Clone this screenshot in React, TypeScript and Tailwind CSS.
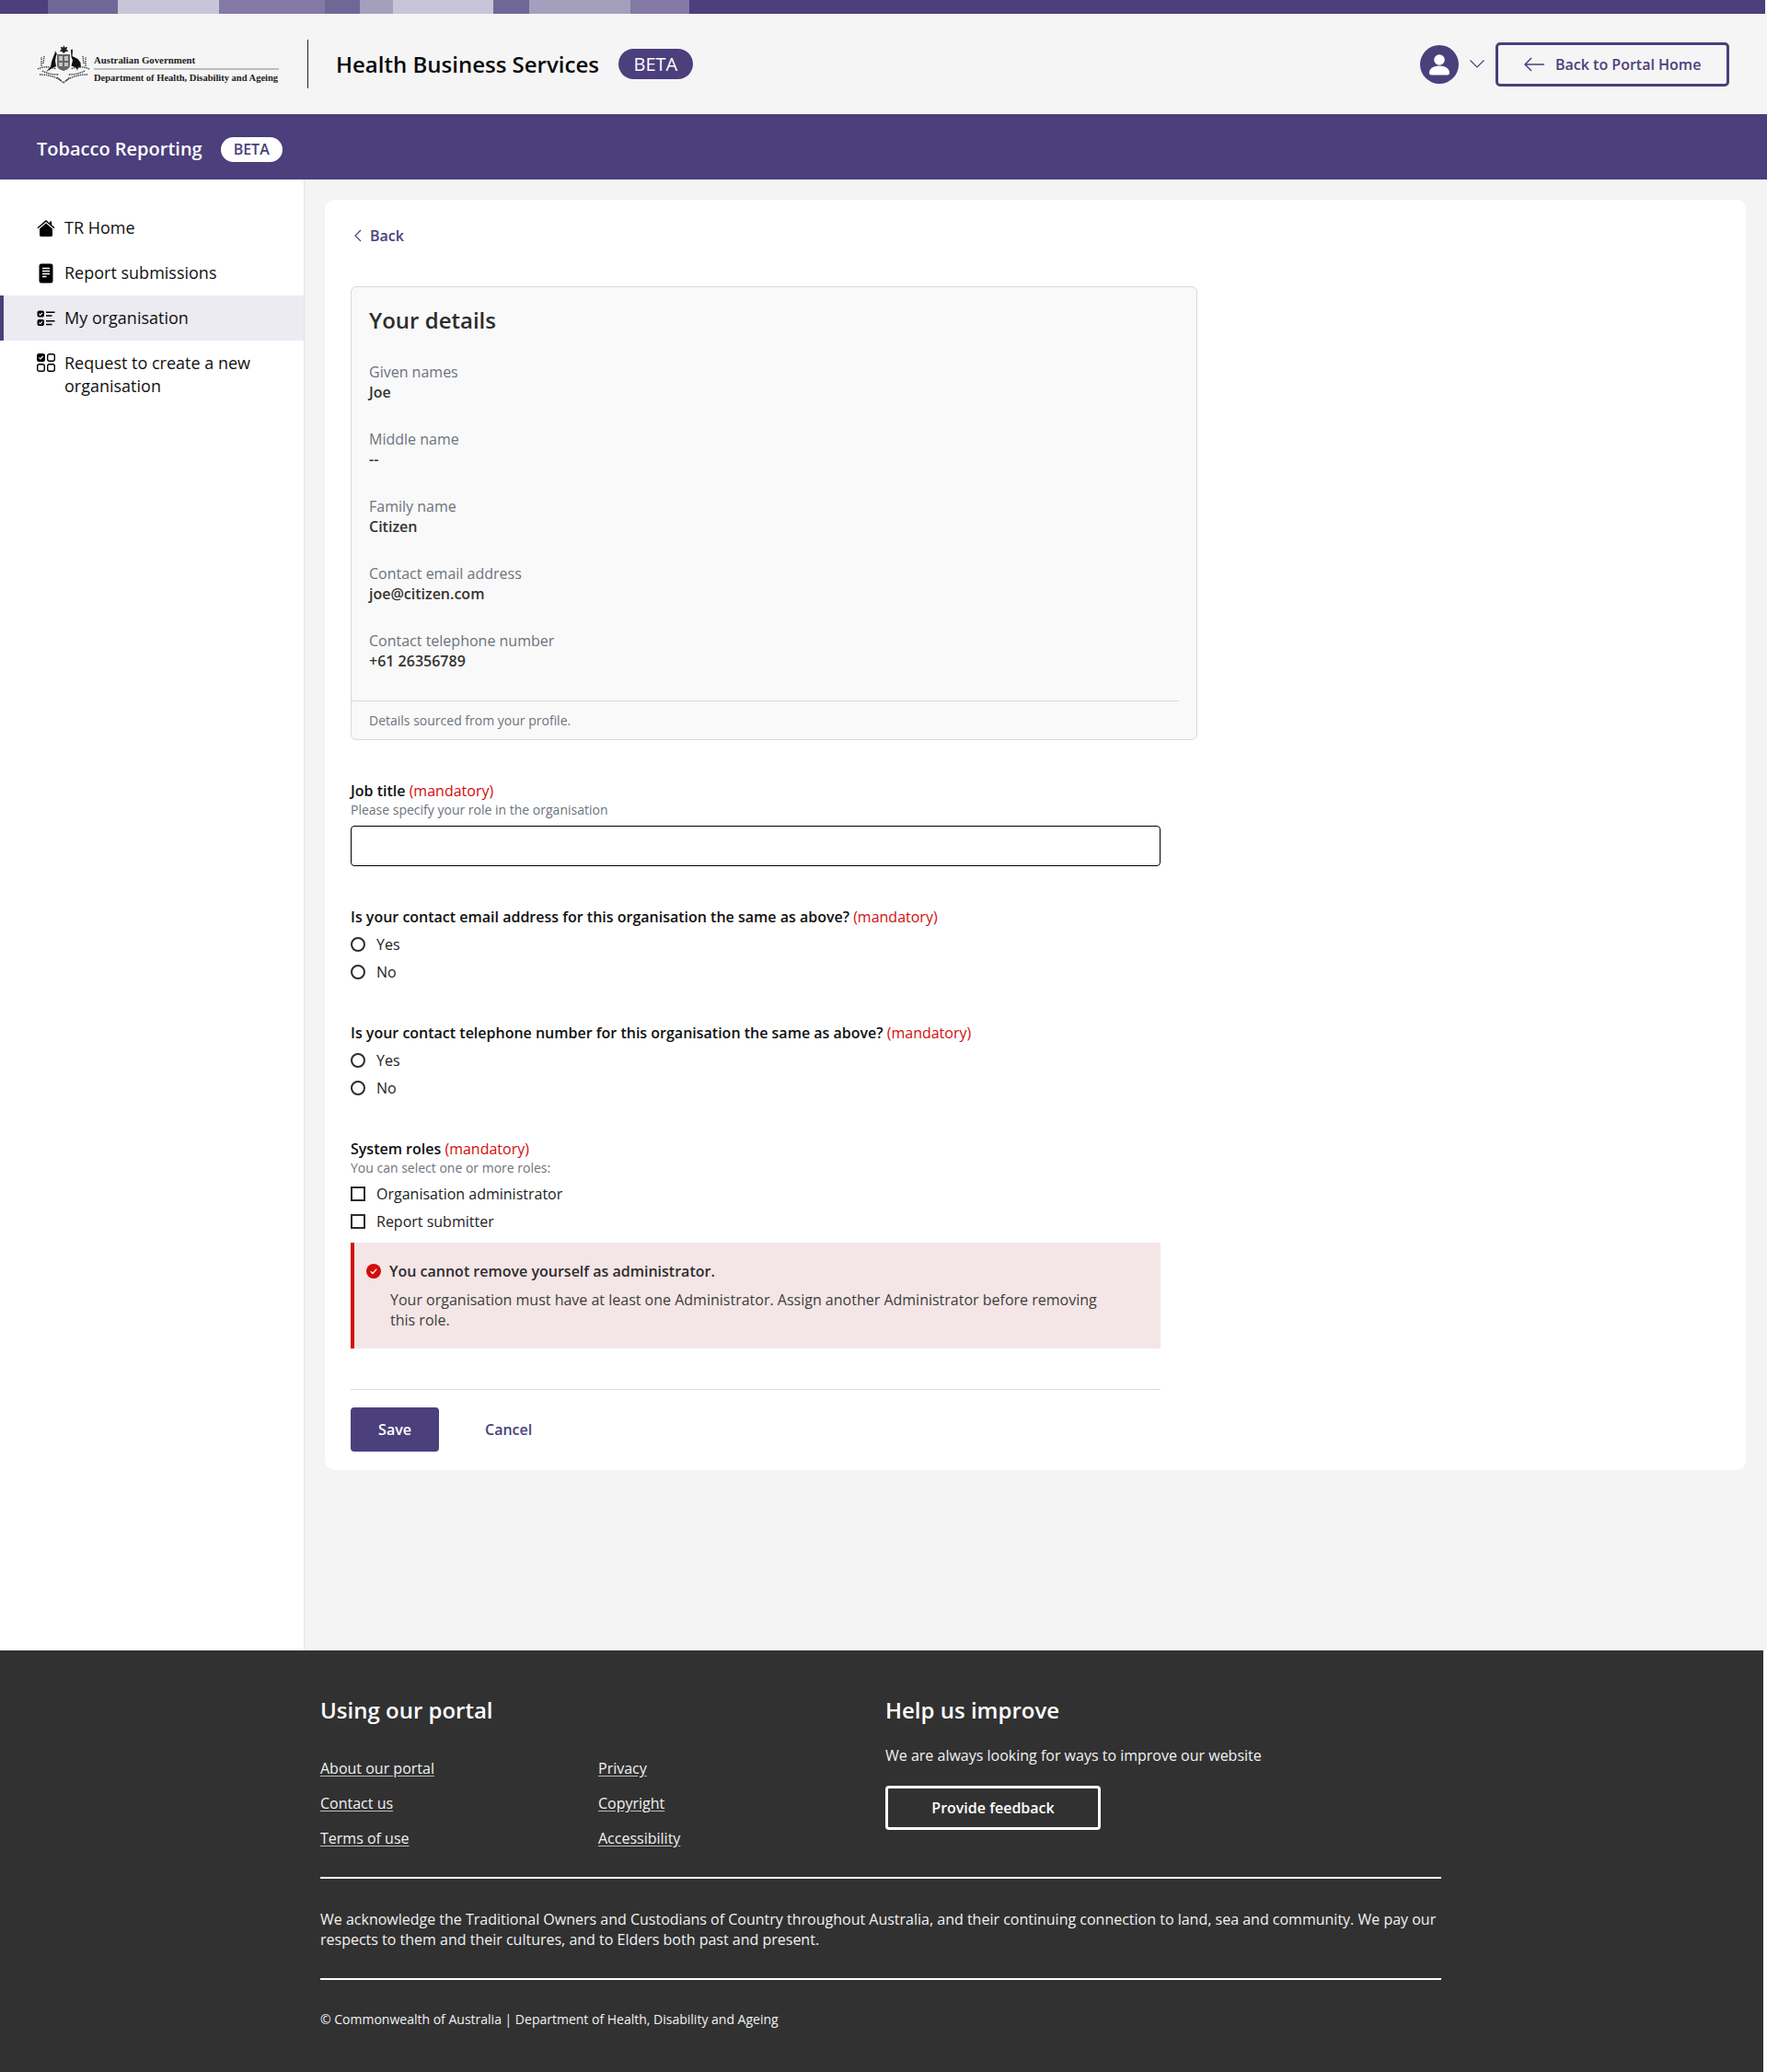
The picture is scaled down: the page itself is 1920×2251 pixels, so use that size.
import type { ReactNode } from 'react'

const stripes = [
  ['w-[52px]', 'bg-[#4b3f7c]'],
  ['w-[76px]', 'bg-[#6f6896]'],
  ['w-[110px]', 'bg-[#c9c5d8]'],
  ['w-[115px]', 'bg-[#827aa5]'],
  ['w-[38px]', 'bg-[#6f6896]'],
  ['w-[36px]', 'bg-[#a59fbe]'],
  ['w-[109px]', 'bg-[#c9c5d8]'],
  ['w-[39px]', 'bg-[#6f6896]'],
  ['w-[110px]', 'bg-[#a59fbe]'],
  ['w-[64px]', 'bg-[#827aa5]'],
  ['flex-1', 'bg-[#4b3f7c]'],
]

function Crest() {
  return (
    <svg width="58" height="42" viewBox="0 0 58 42" className="shrink-0">
      {/* star */}
      <path d="M29 0l1.400 2.600 2.800-.6-.9 2.700 2 2-2.800.4L29 9l-1.500-1.900-2.800-.4 2-2-.9-2.700 2.800.6z" fill="#222" />
      {/* shield */}
      <path d="M22 10h14v12c0 3-3 5-7 6-4-1-7-3-7-6z" fill="#666" />
      <path d="M24 12h4v5h-4zM30 12h4v5h-4zM24 19h4v4h-4zM30 19h4v4h-4z" fill="#c4c4c4" />
      {/* kangaroo */}
      <path d="M20 6l1 2.500 1 .5-1 2.500-1 5.500 1 6-4 2-7 4 5-5.500 1-5.500 2-5.500 1.500-3.500z" fill="#111" />
      {/* emu */}
      <path d="M37 5l1.500-.5.5 1.500-.5 6 6 3 3 4 .5 5-3 .5-1 3-1.500-3-5-2 .5-2 1-4-1.500-3.500z" fill="#111" />
      {/* wreath */}
      <g fill="none" stroke="#333" strokeWidth="1.300" strokeDasharray="1.500 .8">
        <path d="M1 26c6-3 13-3 20 0M57 26c-6-3-13-3-20 0" />
        <path d="M3 32c7 0 15 1 24 7M55 32c-7 0-15 1-24 7" />
        <path d="M6 28c5 3 11 4 18 4M52 28c-5 3-11 4-18 4" />
        <path d="M5 23V13M7 20l1-8M53 23V13M51 20l-1-8" />
        <path d="M22 35l7 6 7-6" />
      </g>
    </svg>
  )
}

function Logo() {
  return (
    <div className="flex items-center gap-[4px] w-[263px]">
      <Crest />
      <div className="flex-1 pt-[10px] font-['Liberation_Serif',serif] font-bold text-[#222] whitespace-nowrap">
        <div className="text-[10.800px] leading-[18px]">Australian Government</div>
        <div className="h-[2px] bg-[#bdbdbd]" />
        <div className="text-[10.500px] leading-[17px]">Department of Health, Disability and Ageing</div>
      </div>
    </div>
  )
}

function HomeIcon() {
  return (
    <svg width="20" height="20" viewBox="0 0 20 20">
      <path d="M10 1l4 3.400V2.500h2.200v3.800L19.500 9.300l-.9 1L10 3 1.400 10.300l-.9-1z" fill="#000" />
      <path d="M3 10.500L10 4.600l7 5.900v6.700c0 1-.7 1.700-1.700 1.700H4.700C3.700 18.900 3 18.200 3 17.200z" fill="#000" />
    </svg>
  )
}

function DocIcon() {
  return (
    <svg width="20" height="22" viewBox="0 0 20 22">
      <rect x="2.500" y="0.500" width="15" height="21" rx="2.500" fill="#000" />
      <path d="M6 5.500h8M6 8.500h8M6 11.500h8M6 14.500h4.500" stroke="#fff" strokeWidth="1.300" />
    </svg>
  )
}

function ListIcon() {
  return (
    <svg width="20" height="20" viewBox="0 0 20 20">
      <rect x="0.500" y="1.500" width="7.500" height="7" rx="2" fill="#000" />
      <rect x="0.500" y="11" width="7.500" height="7" rx="2" fill="#000" />
      <path d="M2.500 5l1.300 1.300L6 3.800M2.500 14.500l1.300 1.300L6 13.300" fill="none" stroke="#fff" strokeWidth="1.100" />
      <path d="M10 3.200h9.500M10 7h6.500M10 12.700h9.500M10 16.500h6.500" stroke="#000" strokeWidth="1.500" />
    </svg>
  )
}

function GridIcon() {
  return (
    <svg width="20" height="20" viewBox="0 0 20 20">
      <rect x="0" y="0" width="9" height="9" rx="2.200" fill="#000" />
      <path d="M2.500 4.500l1.500 1.500 2.700-3" fill="none" stroke="#fff" strokeWidth="1.200" />
      <rect x="11.700" y="0.700" width="7.600" height="7.600" rx="2" fill="none" stroke="#000" strokeWidth="1.400" />
      <rect x="0.700" y="11.700" width="7.600" height="7.600" rx="2" fill="none" stroke="#000" strokeWidth="1.400" />
      <rect x="11.700" y="11.700" width="7.600" height="7.600" rx="2" fill="none" stroke="#000" strokeWidth="1.400" />
    </svg>
  )
}

function NavItem({ icon, active, children }: { icon: ReactNode; active?: boolean; children: ReactNode }) {
  return (
    <div
      className={
        active
          ? 'flex items-center h-[49px] pl-[36px] gap-[10px] border-l-4 border-[#4b3f7c] bg-[#ecebf1]'
          : 'flex items-center h-[49px] pl-[40px] gap-[10px]'
      }
    >
      {icon}
      <span className="text-[18px] leading-[25px] text-[#111]">{children}</span>
    </div>
  )
}

function Detail({ label, value }: { label: string; value: string }) {
  return (
    <div className="h-[73px]">
      <div className="text-[16px] leading-[22px] text-[#6c737d]">{label}</div>
      <div className="text-[16px] leading-[22px] font-semibold text-[#333]">{value}</div>
    </div>
  )
}

function Mandatory() {
  return <span className="font-normal text-[#d60b0b]"> (mandatory)</span>
}

function Radio({ label }: { label: string }) {
  return (
    <div className="flex items-center gap-[12px] h-[30px]">
      <span className="w-[16px] h-[16px] rounded-full border-2 border-[#2d2d2d]" />
      <span className="text-[16px] text-[#222]">{label}</span>
    </div>
  )
}

function Check({ label }: { label: string }) {
  return (
    <div className="flex items-center gap-[12px] h-[30px]">
      <span className="w-[16px] h-[16px] border-2 border-[#2d2d2d]" />
      <span className="text-[16px] text-[#222]">{label}</span>
    </div>
  )
}

function Question({ text, className }: { text: string; className: string }) {
  return (
    <div className={className}>
      <div className="text-[16px] leading-[22px] font-semibold text-[#111]">
        {text}
        <Mandatory />
      </div>
      <div className="mt-[4px]">
        <Radio label="Yes" />
        <Radio label="No" />
      </div>
    </div>
  )
}

function FooterLink({ children }: { children: ReactNode }) {
  return <a className="block h-[38px] text-[16px] leading-[22px] text-[#f2f2f2] underline underline-offset-2 decoration-[#bdbdbd]">{children}</a>
}

export default function App() {
  return (
    <div className="w-[1920px] bg-white font-['Open_Sans',sans-serif]">
      <div className="bg-[#f5f5f5]">
        <div className="flex h-[15px] w-[1918px]">
          {stripes.map(([w, c], i) => (
            <div key={i} className={`${w} ${c}`} />
          ))}
        </div>
        <header className="flex items-center h-[109px] pl-[40px] pr-[41px]">
          <Logo />
          <div className="w-px h-[53px] bg-[#222] ml-[31px]" />
          <div className="ml-[30px] text-[24px] font-semibold text-[#0a0a0a]">Health Business Services</div>
          <div className="ml-[21px] flex items-center justify-center w-[81px] h-[33px] rounded-full bg-[#4b3f7c] text-[20px] font-medium text-white">BETA</div>
          <div className="ml-auto flex items-center">
            <div className="flex items-center justify-center w-[42px] h-[42px] rounded-full bg-[#4b3f7c]">
              <svg width="24" height="24" viewBox="0 0 24 24" fill="#fff">
                <circle cx="12" cy="7" r="5.800" />
                <path d="M1 21c0-4.500 4.500-7.600 11-7.600s11 3.100 11 7.600c0 1.500-.8 2.400-2 2.400H3c-1.200 0-2-.9-2-2.400z" />
              </svg>
            </div>
            <svg width="16" height="9" viewBox="0 0 16 9" className="ml-[12px]" fill="none" stroke="#4b3f7c" strokeWidth="1.200">
              <path d="M.5.5L8 8 15.500.5" />
            </svg>
            <button className="ml-[12px] flex items-center gap-[12px] h-[48px] w-[254px] pl-[28px] rounded-[5px] border-[3px] border-[#4b3f7c] text-[16px] font-semibold text-[#4b3f7c]">
              <svg width="22" height="16" viewBox="0 0 22 16" fill="none" stroke="#4b3f7c" strokeWidth="1.500">
                <path d="M22 8H1M8 1L1 8l7 7" />
              </svg>
              Back to Portal Home
            </button>
          </div>
        </header>
      </div>

      <div className="flex items-center h-[71px] pl-[40px] pt-[5px] bg-[#4b3f7c] text-white">
        <span className="text-[20px] font-semibold">Tobacco Reporting</span>
        <span className="ml-[20px] flex items-center justify-center w-[67px] h-[27px] rounded-full bg-white text-[16px] font-semibold text-[#4b3f7c]">BETA</span>
      </div>

      <div className="flex h-[1598px] bg-[#f4f4f4]">
        <aside className="w-[331px] shrink-0 bg-white border-r border-[#e3e3e3] pt-[28px]">
          <NavItem icon={<HomeIcon />}>TR Home</NavItem>
          <NavItem icon={<DocIcon />}>Report submissions</NavItem>
          <NavItem icon={<ListIcon />} active>My organisation</NavItem>
          <div className="flex items-start pl-[40px] gap-[10px] pt-[12px]">
            <div className="pt-[2px]"><GridIcon /></div>
            <span className="text-[18px] leading-[25px] text-[#111]">Request to create a new<br />organisation</span>
          </div>
        </aside>

        <main className="flex-1 pl-[22px] pr-[23px] pt-[22px]">
          <div className="h-[1380px] rounded-[10px] bg-white pl-[28px] pt-[28px]">
            <a className="flex items-center gap-[9px] h-[22px] pl-[3px] text-[16px] font-semibold text-[#4b3f7c]">
              <svg width="9" height="14" viewBox="0 0 9 14" fill="none" stroke="#4b3f7c" strokeWidth="1.200">
                <path d="M8 1L2 7l6 6" />
              </svg>
              Back
            </a>
            <section className="mt-[44px] w-[920px] h-[493px] rounded-[6px] border border-[#d9d9d9] bg-[#f9f9f9]">
              <h2 className="pl-[19px] pt-[18px] text-[24px] leading-[36px] font-semibold text-[#2d2d2d]">Your details</h2>
              <div className="pl-[19px] mt-[27px]">
                <Detail label="Given names" value="Joe" />
                <Detail label="Middle name" value="--" />
                <Detail label="Family name" value="Citizen" />
                <Detail label="Contact email address" value="joe@citizen.com" />
                <Detail label="Contact telephone number" value="+61 26356789" />
              </div>
              <div className="w-[899px] h-px bg-[#d9d9d9] mt-[3px]" />
              <div className="pl-[19px] pt-[11px] text-[14px] leading-[20px] text-[#6c737d]">Details sourced from your profile.</div>
            </section>

            <div className="w-[880px]">
              <div className="mt-[44px] text-[16px] leading-[22px] font-semibold text-[#111]">
                Job title
                <Mandatory />
              </div>
              <div className="text-[14px] leading-[20px] text-[#6c737d]">Please specify your role in the organisation</div>
              <input className="block w-full h-[44px] mt-[7px] rounded-[4px] border border-black bg-white" />

              <Question className="mt-[44px]" text="Is your contact email address for this organisation the same as above?" />
              <Question className="mt-[40px]" text="Is your contact telephone number for this organisation the same as above?" />

              <div className="mt-[40px] text-[16px] leading-[22px] font-semibold text-[#111]">
                System roles
                <Mandatory />
              </div>
              <div className="text-[14px] leading-[20px] text-[#6c737d]">You can select one or more roles:</div>
              <div className="mt-[3px]">
                <Check label="Organisation administrator" />
                <Check label="Report submitter" />
              </div>

              <div className="mt-[8px] h-[115px] border-l-4 border-[#d60b0b] bg-[#f4e6e6] pl-[13px] pt-[20px] pr-[60px]">
                <div className="flex items-center gap-[9px]">
                  <svg width="16" height="16" viewBox="0 0 16 16" className="shrink-0">
                    <circle cx="8" cy="8" r="8" fill="#d60b0b" />
                    <path d="M4.800 8.200l2.200 2.200 4.200-4.800" fill="none" stroke="#fff" strokeWidth="1.400" />
                  </svg>
                  <span className="text-[16px] leading-[22px] font-semibold text-[#2d2d2d]">You cannot remove yourself as administrator.</span>
                </div>
                <p className="mt-[10px] ml-[26px] text-[16px] leading-[21.500px] text-[#3d3d3d]">
                  Your organisation must have at least one Administrator. Assign another Administrator before removing this role.
                </p>
              </div>

              <div className="mt-[44px] h-px bg-[#d9d9d9]" />
              <div className="mt-[19px] flex items-center">
                <button className="w-[96px] h-[48px] rounded-[4px] bg-[#4b3f7c] text-[16px] font-semibold text-white">Save</button>
                <a className="ml-[50px] text-[16px] font-semibold text-[#4b3f7c]">Cancel</a>
              </div>
            </div>
          </div>
        </main>
      </div>

      <footer className="w-[1916px] h-[458px] bg-[#313131] pl-[348px] pt-[47px] text-[#f2f2f2]">
        <div className="w-[1218px]">
          <div className="flex h-[199px]">
            <div className="w-[614px]">
              <h3 className="text-[24px] leading-[36px] font-semibold text-white">Using our portal</h3>
              <div className="mt-[34px] flex">
                <div className="w-[302px]">
                  <FooterLink>About our portal</FooterLink>
                  <FooterLink>Contact us</FooterLink>
                  <FooterLink>Terms of use</FooterLink>
                </div>
                <div>
                  <FooterLink>Privacy</FooterLink>
                  <FooterLink>Copyright</FooterLink>
                  <FooterLink>Accessibility</FooterLink>
                </div>
              </div>
            </div>
            <div>
              <h3 className="text-[24px] leading-[36px] font-semibold text-white">Help us improve</h3>
              <p className="mt-[20px] text-[16px] leading-[22px]">We are always looking for ways to improve our website</p>
              <button className="mt-[22px] w-[234px] h-[48px] rounded-[4px] border-[3px] border-white text-[16px] font-semibold text-white">Provide feedback</button>
            </div>
          </div>
          <div className="h-[2px] bg-white" />
          <p className="mt-[33px] text-[16px] leading-[22px]">
            We acknowledge the Traditional Owners and Custodians of Country throughout Australia, and their continuing connection to land, sea and community. We pay our respects to them and their cultures, and to Elders both past and present.
          </p>
          <div className="mt-[31px] h-[2px] bg-white" />
          <p className="mt-[33px] text-[14px] leading-[20px]">© Commonwealth of Australia | Department of Health, Disability and Ageing</p>
        </div>
      </footer>
    </div>
  )
}
